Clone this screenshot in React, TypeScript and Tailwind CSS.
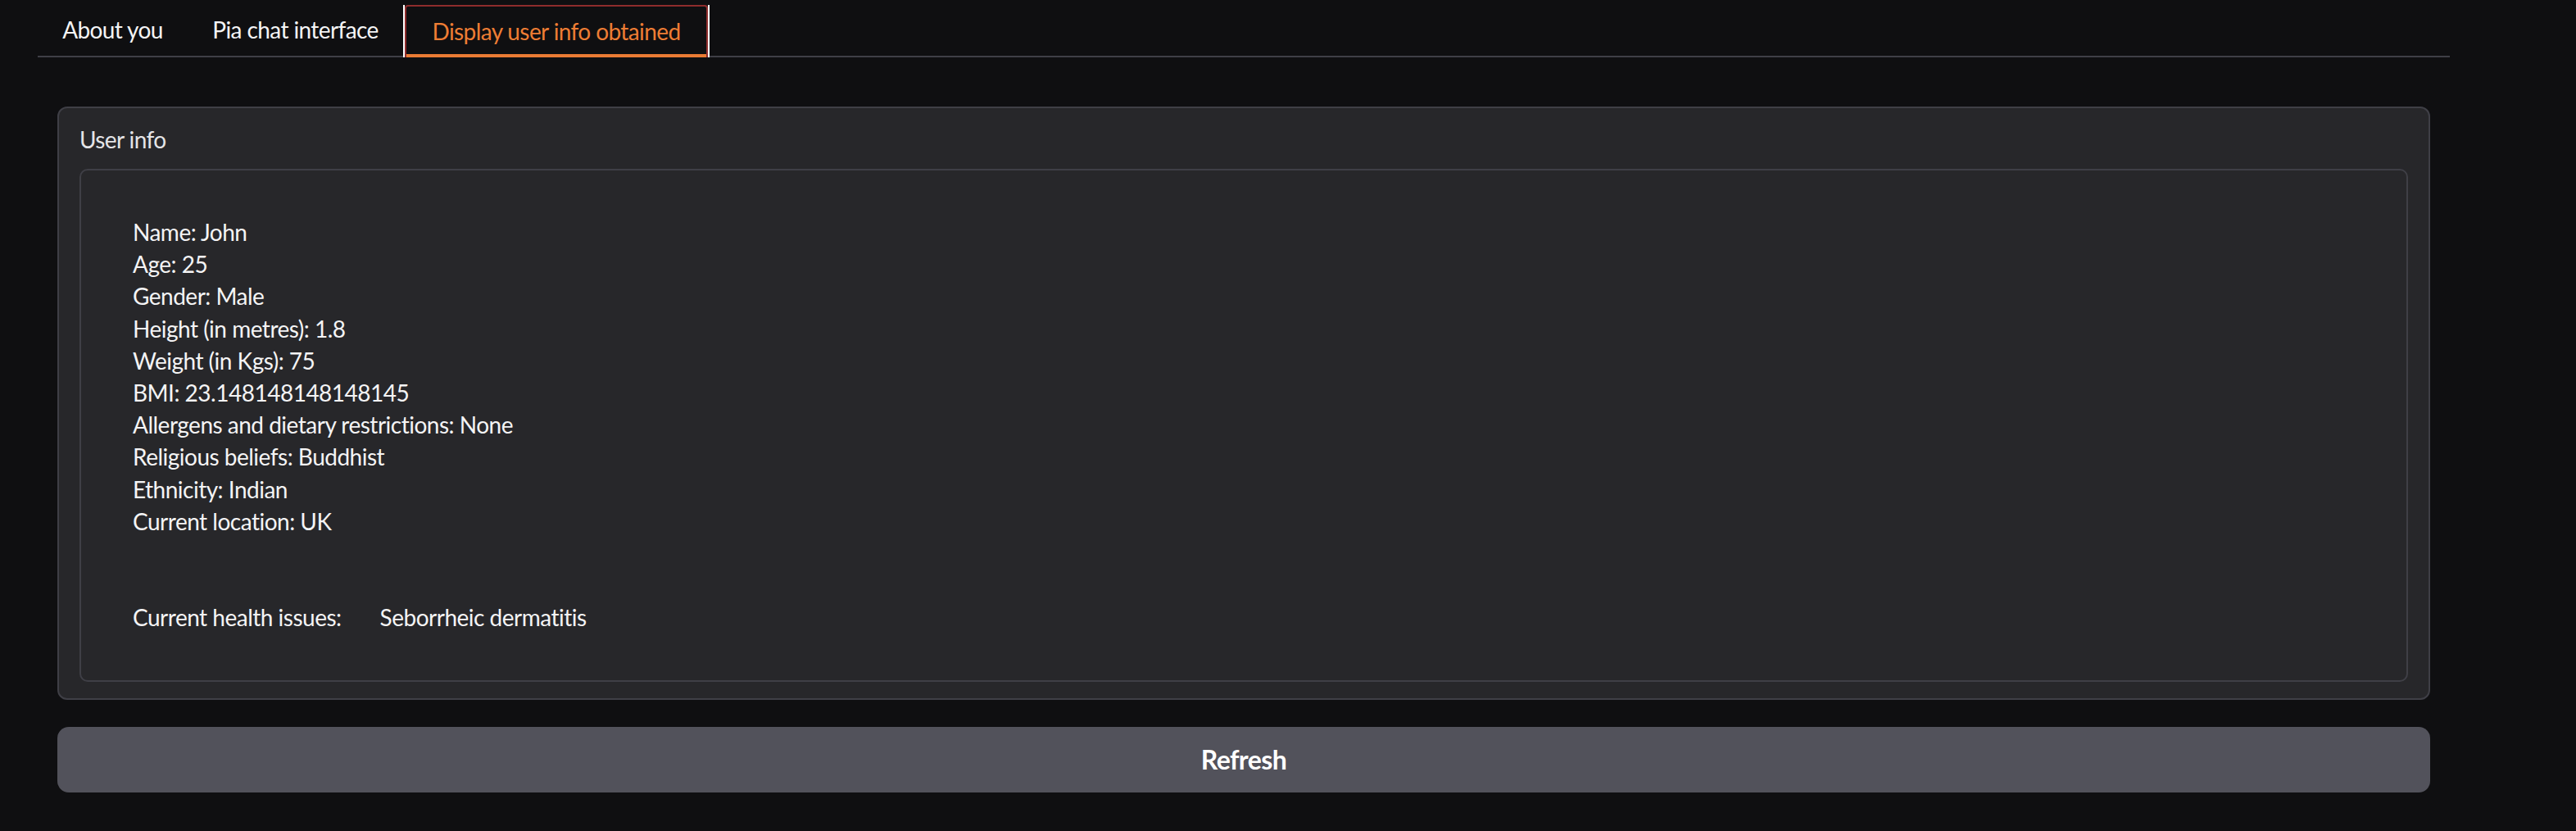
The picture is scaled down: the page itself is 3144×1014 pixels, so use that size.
import React from "react";

const lines = [
  "Name: John",
  "Age: 25",
  "Gender: Male",
  "Height (in metres): 1.8",
  "Weight (in Kgs): 75",
  "BMI: 23.148148148148145",
  "Allergens and dietary restrictions: None",
  "Religious beliefs: Buddhist",
  "Ethnicity: Indian",
  "Current location: UK",
];

export default function App() {
  return (
    <div
      className="min-h-[1014px] w-full bg-[#0f0f11] text-[#f4f4f5]"
      style={{ fontFamily: "Lato, 'Open Sans', sans-serif" }}
    >
      <div className="ml-[46px] w-[2944px] pt-[6px]">
        {/* Tabs */}
        <div className="flex h-[64px] items-stretch border-b-2 border-[#3f3f46] text-[28px] tracking-[-0.6px]">
          <button className="flex w-[183px] items-center justify-center pb-[2px] text-[#f4f4f5]">
            About you
          </button>
          <button className="flex w-[263px] items-center justify-center pb-[2px] text-[#f4f4f5]">
            Pia chat interface
          </button>
          <div className="relative -mb-[2px] flex w-[374px] border-x-2 border-white">
            <div className="flex flex-1 flex-col rounded-t-[4px] border-x-2 border-t-2 border-[#8e2c2c]">
              <div className="flex flex-1 items-center justify-center pt-[2px] text-[#ee7d34]">
                Display user info obtained
              </div>
              <div className="h-[4px] bg-[#ea7b34]" />
            </div>
          </div>
        </div>

        {/* Panel */}
        <div className="ml-[24px] mt-[60px] w-[2896px]">
          <div className="rounded-[12px] border-2 border-[#3f3f46] bg-[#27272a] px-[25px] pb-[20px] pt-[19px]">
            <div className="mb-[16px] text-[28px] leading-[39px] tracking-[-0.6px] text-[#e4e4e7]">
              User info
            </div>
            <div className="rounded-[10px] border-2 border-[#3f3f46] bg-[#27272a] pb-[56px] pl-[63px] pt-[56px] text-[28px] leading-[39.2px] tracking-[-0.5px]">
              {lines.map((l) => (
                <div key={l}>{l}</div>
              ))}
              <div>&nbsp;</div>
              <div>&nbsp;</div>
              <div className="flex">
                <span>Current health issues:</span>
                <span className="ml-[47px]">Seborrheic dermatitis</span>
              </div>
            </div>
          </div>

          <button className="mt-[33px] flex h-[80px] w-full items-center justify-center rounded-[14px] bg-[#52525b] text-[32px] font-bold tracking-[-0.6px] text-white">
            Refresh
          </button>
        </div>
      </div>
    </div>
  );
}
